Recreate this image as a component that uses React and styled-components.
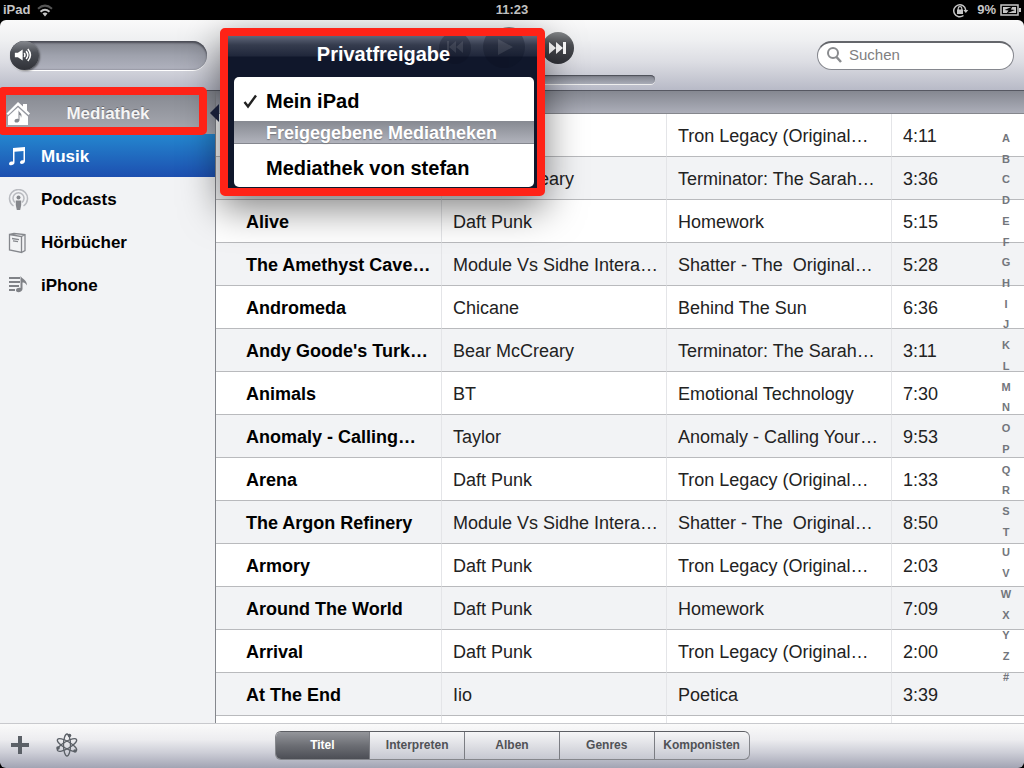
import React from "react";
import styled, { createGlobalStyle, css } from "styled-components";

const GlobalStyle = createGlobalStyle`
  *, *::before, *::after { box-sizing: border-box; }
  body {
    margin: 0;
    background: #000;
    color: #000;
    font-family: "Liberation Sans", Arial, sans-serif;
  }
  button { font: inherit; border: 0; padding: 0; background: none; color: inherit; cursor: pointer; }
`;

const songs = [
  ["", "", "Tron Legacy (Original…", "4:11"],
  ["", "Bear McCreary", "Terminator: The Sarah…", "3:36"],
  ["Alive", "Daft Punk", "Homework", "5:15"],
  ["The Amethyst Cave…", "Module Vs Sidhe Intera…", "Shatter - The  Original…", "5:28"],
  ["Andromeda", "Chicane", "Behind The Sun", "6:36"],
  ["Andy Goode's Turk…", "Bear McCreary", "Terminator: The Sarah…", "3:11"],
  ["Animals", "BT", "Emotional Technology", "7:30"],
  ["Anomaly - Calling…", "Taylor", "Anomaly - Calling Your…", "9:53"],
  ["Arena", "Daft Punk", "Tron Legacy (Original…", "1:33"],
  ["The Argon Refinery", "Module Vs Sidhe Intera…", "Shatter - The  Original…", "8:50"],
  ["Armory", "Daft Punk", "Tron Legacy (Original…", "2:03"],
  ["Around The World", "Daft Punk", "Homework", "7:09"],
  ["Arrival", "Daft Punk", "Tron Legacy (Original…", "2:00"],
  ["At The End", "Iio", "Poetica", "3:39"],
  ["", "", "", ""],
];

const letters = "ABCDEFGHIJKLMNOPQRSTUVWXYZ#".split("");
const tabs = ["Titel", "Interpreten", "Alben", "Genres", "Komponisten"];

const Screen = styled.div`
  position: relative;
  display: flex;
  flex-direction: column;
  height: 100vh;
  overflow: hidden;
`;

const StatusBar = styled.header`
  display: grid;
  grid-template-columns: 1fr auto 1fr;
  align-items: center;
  height: 20px;
  padding: 0 3px;
  color: #c6c6c6;
  font-size: 13px;
  font-weight: bold;
  line-height: 18px;
`;

const StatusGroup = styled.div`
  display: flex;
  align-items: center;
  gap: ${(p) => (p.$end ? "4px" : "6px")};
  justify-content: ${(p) => (p.$end ? "flex-end" : "flex-start")};
`;

const StatusLevel = styled.span`
  padding-left: 4px;
`;

const Toolbar = styled.section`
  display: grid;
  grid-template-columns: 197px 1fr 197px;
  align-items: center;
  flex: none;
  height: 71px;
  padding: 0 10px;
  border-bottom: 1px solid #565862;
  border-radius: 6px 6px 0 0;
  background: linear-gradient(#fafafa 0%, #eeeff1 30%, #dcdde3 60%, #b8bac7 100%);
`;

const Volume = styled.label`
  position: relative;
  display: block;
  height: 29px;

  svg {
    position: absolute;
    left: 4px;
    top: 5px;
    pointer-events: none;
  }
`;

const VolumeRange = styled.input`
  appearance: none;
  display: block;
  width: 100%;
  height: 29px;
  margin: 0;
  border-radius: 15px;
  background: linear-gradient(#83868f, #9fa2ad 50%, #b0b2be);
  box-shadow: inset 0 2px 2px #4c4e57, inset 1px 0 2px #666973, 0 1px 0 #fff;

  &::-webkit-slider-thumb {
    appearance: none;
    width: 29px;
    height: 29px;
    border-radius: 50%;
    background: linear-gradient(#85888e, #4b4e55 40%, #303238);
    box-shadow: 1px 1px 2px rgba(0, 0, 0, 0.5);
  }
`;

const Player = styled.div`
  display: flex;
  flex-direction: column;
  align-items: center;
  gap: 6px;
`;

const Transport = styled.div`
  display: flex;
  align-items: center;
  gap: 12px;
  height: 42px;
  padding-right: 6px;
`;

const RoundButton = styled.button`
  display: grid;
  place-items: center;
  width: ${(p) => (p.$large ? 42 : 32)}px;
  height: ${(p) => (p.$large ? 42 : 32)}px;
  border-radius: 50%;
  background: linear-gradient(#85888a, #4b4d52 40%, #303238);
  color: #fff;
`;

const Progress = styled.input`
  appearance: none;
  width: 286px;
  height: 9px;
  margin: 0;
  border-radius: 5px;
  background: linear-gradient(#7c7f89, #a9acb7);
  box-shadow: inset 0 1px 1px #4c4e57, 0 1px 0 #eee;

  &::-webkit-slider-thumb {
    appearance: none;
    width: 8px;
    height: 8px;
  }
`;

const Search = styled.label`
  display: flex;
  align-items: center;
  gap: 7px;
  height: 29px;
  padding: 0 9px 2px;
  border: 1px solid #85878e;
  border-top: 2px solid #64666b;
  border-radius: 15px;
  background: #fff;

  input {
    min-width: 0;
    flex: 1;
    padding: 0;
    border: 0;
    outline: 0;
    background: none;
    font: 15px "Liberation Sans", Arial, sans-serif;
  }
  input::placeholder { color: #808080; }
`;

const Main = styled.main`
  display: flex;
  flex: 1;
  min-height: 0;
`;

const Sidebar = styled.nav`
  flex: none;
  width: 216px;
  border-right: 1px solid #85878d;
  background: #f2f3f5;
`;

const rowText = css`
  display: flex;
  align-items: center;
  width: 100%;
  height: 43px;
  font-size: 17px;
  font-weight: bold;
`;

const LibraryButton = styled.button`
  ${rowText}
  padding: 2px 6px 0;
  background: linear-gradient(#858890, #a9abb3);
  color: #f5f5f5;
  text-shadow: 0 -1px 0 #6b6d74;

  span { flex: 1; padding-right: 24px; text-align: center; }
`;

const SourceButton = styled.button`
  ${rowText}
  gap: 12px;
  padding: 2px 7px 0;
  text-align: left;
  color: ${(p) => (p.$active ? "#fff" : "#000")};
  background: ${(p) => (p.$active ? "linear-gradient(#2487cf, #1d4fb0)" : "none")};
`;

const Content = styled.section`
  position: relative;
  flex: 1;
  min-width: 0;
  overflow: hidden;
  background: #fff;
`;

const Strip = styled.div`
  height: 23px;
  border-bottom: 1px solid #85878d;
  background: linear-gradient(#858891, #acaeb9);
`;

const SongTable = styled.table`
  width: 100%;
  table-layout: fixed;
  border-collapse: separate;
  border-spacing: 0;
  font-size: 18px;
`;

const Duration = styled.col`
  width: 133px;
`;

const Song = styled.tr`
  background: ${(p) => (p.$shaded ? "#f2f3f5" : "#fff")};
`;

const Cell = styled.td`
  height: 43px;
  padding: 2px 0 0 ${(p) => (p.$title ? 30 : 11)}px;
  border-bottom: 1px solid #b9babd;
  border-left: ${(p) => (p.$title ? "0" : "1px solid #e4e5e8")};
  color: ${(p) => (p.$title ? "#000" : "#222")};
  font-weight: ${(p) => (p.$title ? "bold" : "normal")};
  white-space: pre;
`;

const AlphabetIndex = styled.ol`
  position: absolute;
  top: 37px;
  right: 8px;
  bottom: 36px;
  display: flex;
  flex-direction: column;
  justify-content: space-between;
  width: 20px;
  margin: 0;
  padding: 0;
  list-style: none;
  color: #73767c;
  font-size: 11px;
  font-weight: bold;
  line-height: 20px;
  text-align: center;
`;

const Footer = styled.footer`
  display: grid;
  grid-template-columns: 1fr auto 1fr;
  align-items: center;
  flex: none;
  height: 45px;
  padding: 0 10px 2px;
  border-top: 1px solid #c8c9cd;
  border-radius: 0 0 6px 6px;
  background: linear-gradient(#fafafa, #ededf0 35%, #cdced7 65%, #a2a4b3);
`;

const Tools = styled.div`
  display: flex;
  align-items: center;
  gap: 25px;

  button, svg { display: block; }
`;

const Segments = styled.div`
  display: flex;
  width: 475px;
  height: 29px;
  overflow: hidden;
  border: 1px solid #85878c;
  border-top-color: #5d5f64;
  border-radius: 6px;
  background: linear-gradient(#f6f6f7, #c6c8d1);
`;

const Segment = styled.button`
  flex: 1;
  color: ${(p) => (p.$active ? "#fff" : "#505256")};
  background: ${(p) => (p.$active ? "linear-gradient(#94969b, #6c6e74 50%, #4c4e55)" : "none")};
  font-size: 12px;
  font-weight: bold;

  & + & { border-left: 1px solid #7b7d83; }
`;

const highlight = css`
  position: absolute;
  border: 8px solid #ff2317;
  border-radius: 5px;
`;

const LibraryHighlight = styled.div`
  ${highlight}
  top: 87px;
  left: -2px;
  width: 209px;
  height: 48px;
  pointer-events: none;
`;

const Popover = styled.div`
  ${highlight}
  top: 28px;
  left: 220px;
  width: 325px;
  padding: 0 3px 1px 6px;
  background: #10172b;
  box-shadow: 0 12px 38px rgba(0, 0, 0, 0.5);
`;

const PopoverTitle = styled.h2`
  height: 41px;
  margin: 0 -3px 0 -6px;
  padding: 0 0 4px 2px;
  background: linear-gradient(#60677a 0, #353c4e 9px, #20273b 20px, #10172b 21px);
  color: #fff;
  font-size: 20px;
  line-height: 37px;
  text-align: center;

  span { position: relative; }
`;

const GhostControls = styled.svg`
  position: absolute;
  top: 0;
  right: 3px;
`;

const PopoverArrow = styled.div`
  position: absolute;
  top: 68px;
  left: -18px;
  border: 9px solid transparent;
  border-right-color: #171d35;
  border-left-width: 0;
`;

const Choices = styled.div`
  overflow: hidden;
  border-radius: 5px;
  background: #fff;
`;

const Choice = styled.button`
  display: flex;
  align-items: center;
  width: 100%;
  height: ${(p) => (p.$checked ? 44 : 43)}px;
  padding-left: ${(p) => (p.$checked ? 9 : 32)}px;
  gap: 8px;
  padding-top: 5px;
  color: #000;
  font-size: 20px;
  font-weight: bold;
`;

const ChoiceHeading = styled.h3`
  height: 23px;
  margin: 0;
  padding-left: 32px;
  border-bottom: 1px solid #85878f;
  background: linear-gradient(#868991, #b1b3bc);
  color: #fff;
  text-shadow: 0 1px 1px #777981;
  font-size: 18px;
  line-height: 24px;
`;

const WifiIcon = () => (
  <svg width="18" height="13" viewBox="0 0 18 13" fill="none" strokeWidth="2">
    <path d="M2 4.8 Q9 -1.5 16 4.8" stroke="#555" />
    <path d="M4.5 7.8 Q9 3.8 13.500 7.800" stroke="#c6c6c6" />
    <path d="M6.500 9.500 Q9 7.500 11.500 9.500 L9 12.500Z" fill="#c6c6c6" />
  </svg>
);

const LockIcon = () => (
  <svg width="17" height="15" viewBox="0 0 17 15" fill="none" stroke="#c6c6c6" strokeWidth="1.500">
    <path d="M11.500 12.500 A6 6 0 1 1 13.700 7" />
    <path d="M11.300 7 H16.300 L13.800 10Z" fill="#c6c6c6" stroke="none" />
    <rect x="5" y="6.500" width="6" height="4.500" fill="#c6c6c6" stroke="none" />
    <path d="M6.200 7 V5.500 a1.800 1.800 0 0 1 3.600 0 V7" strokeWidth="1.200" />
  </svg>
);

const BatteryIcon = () => (
  <svg width="21" height="12" viewBox="0 0 21 12">
    <rect x="1" y="1" width="17" height="10" fill="none" stroke="#c6c6c6" strokeWidth="1.500" />
    <path d="M19 4 H21 V8 H19Z" fill="#c6c6c6" />
    <rect x="3" y="3" width="13" height="6" fill="#c6c6c6" />
    <path d="M12.500 2.500 L4.500 6 L8.500 6.500 L6.500 9.500 L15 6 L10.800 5.500Z" fill="#000" />
  </svg>
);

const SpeakerIcon = () => (
  <svg width="19" height="18" viewBox="0 0 22 20" fill="none" stroke="#fff" strokeWidth="1.800">
    <path d="M1 7.500 H4.500 L10 3.500 V16.500 L4.500 12.500 H1Z" fill="#fff" stroke="none" />
    <path d="M11.800 7.800 Q13.500 10 11.800 12.200 M14 5.500 Q18 10 14 14.500 M16 3 Q22 10 16 17" />
  </svg>
);

const SkipIcon = ({ back }) => (
  <svg width="18" height="12" viewBox="0 0 18 12" fill="currentColor">
    <path d={back ? "M18 0 V12 L11 6Z M11 0 V12 L4 6Z M1 0 H4 V12 H1Z" : "M0 0 V12 L7 6Z M7 0 V12 L14 6Z M14 0 H17 V12 H14Z"} />
  </svg>
);

const PlayIcon = () => (
  <svg width="17" height="17" viewBox="0 0 17 17" fill="currentColor"><path d="M2 0 L17 8.500 L2 17Z" /></svg>
);

const SearchIcon = () => (
  <svg width="15" height="16" viewBox="0 0 15 16" fill="none" stroke="#898b8e" strokeWidth="2">
    <circle cx="6" cy="6" r="5" /><path d="M9.500 10 L14 15" strokeWidth="2.500" />
  </svg>
);

const HouseIcon = () => (
  <svg width="25" height="25" viewBox="0 0 25 25">
    <path d="M0.500 12.500 L12 1 L17 5.500 V3 H21 V9.500 L24 12.500 L22.500 14 L12 4.500 L2 14Z" fill="#fff" />
    <path d="M2 15.500 L12 6.200 L22 15.500 V24 H2Z" fill="#fff" />
    <path d="M12.500 9 C13 12 17 12 15 17 C15 14.500 14 14 13.500 14 V19 C13.500 22 8.500 22.500 8.500 20 C8.500 18 11 17.200 12.500 18Z" fill="#85888f" />
  </svg>
);

const sourceIcons = {
  music: (
    <svg width="22" height="22" viewBox="0 0 22 22" fill="#fff">
      <path d="M6 2 L18 1 V15 C18 18 13 19 13 16.500 C13 14.500 15 14 16.500 14.200 V5 L7.500 5.700 V16.500 C7.500 19.500 2 20.200 2 17.700 C2 15.700 4.500 15.200 6 15.500Z" />
    </svg>
  ),
  podcasts: (
    <svg width="22" height="22" viewBox="0 0 22 22" fill="none" stroke="#b9bbc0" strokeWidth="1.500">
      <path d="M6.500 17 A9 9 0 1 1 16.500 17 M8 13.500 A5.500 5.500 0 1 1 15 13.500" />
      <circle cx="11.500" cy="8.500" r="2" fill="#85878c" stroke="none" />
      <path d="M8.800 11.500 H14.200 V16 L13.200 21 H9.800 L8.800 16Z" fill="#85878c" stroke="none" />
    </svg>
  ),
  books: (
    <svg width="22" height="22" viewBox="0 0 22 22" fill="none" stroke="#85878c" strokeWidth="1.300">
      <path d="M2.500 2.500 L14.500 4.500 V20.500 L2.500 18Z M2.500 2.500 L7 1.500 L18 2.700 V18.500 L14.500 20.500 M14.500 4.500 L18 2.700" />
      <path d="M5 6.500 L12 7.600 M6 8.800 L11 9.600" />
    </svg>
  ),
  playlist: (
    <svg width="22" height="22" viewBox="0 0 22 22" fill="#808287">
      <path d="M2 2 H13 V4 H2Z M2 6 H13 V8 H2Z M2 10 H12 V12 H2Z M2 14 H8 V16 H2Z" />
      <path d="M13.500 1 C15 4 20 4.500 20 10.500 C18.500 8 17 7.500 15.500 7.500 V14 C15.500 17.500 9 18.300 9 15.300 C9 13 12 12.500 13.500 13Z" />
    </svg>
  ),
};

const sources = [
  ["Musik", "music"],
  ["Podcasts", "podcasts"],
  ["Hörbücher", "books"],
  ["iPhone", "playlist"],
];

const PlusIcon = () => (
  <svg width="20" height="20" viewBox="0 0 20 20"><path d="M1 10 H19 M10 1 V19" stroke="#5b6067" strokeWidth="4" /></svg>
);

const GeniusIcon = () => (
  <svg width="24" height="24" viewBox="0 0 24 24" fill="none" stroke="#5b6067" strokeWidth="1.300">
    {[0, 60, 120].map((a) => (
      <ellipse key={a} cx="12" cy="12" rx="3.500" ry="11" transform={`rotate(${a} 12 12)`} />
    ))}
    <g fill="#5b6067" stroke="none">
      <circle cx="14.500" cy="2.500" r="1.800" /><circle cx="3" cy="15" r="1.800" /><circle cx="20" cy="18" r="1.800" />
    </g>
  </svg>
);

const CheckIcon = () => (
  <svg width="15" height="15" viewBox="0 0 15 15" fill="none" stroke="#222" strokeWidth="2.400">
    <path d="M1.500 8 L5 12.500 L13 1.500" />
  </svg>
);

export default function App() {
  return (
    <>
      <GlobalStyle />
      <Screen>
        <StatusBar>
          <StatusGroup>iPad<WifiIcon /></StatusGroup>
          <time>11:23</time>
          <StatusGroup $end><LockIcon /><StatusLevel>9%</StatusLevel><BatteryIcon /></StatusGroup>
        </StatusBar>
        <Toolbar>
          <Volume>
            <VolumeRange type="range" defaultValue="0" aria-label="Lautstärke" />
            <SpeakerIcon />
          </Volume>
          <Player>
            <Transport>
              <RoundButton aria-label="Zurück"><SkipIcon back /></RoundButton>
              <RoundButton $large aria-label="Wiedergabe"><PlayIcon /></RoundButton>
              <RoundButton aria-label="Weiter"><SkipIcon /></RoundButton>
            </Transport>
            <Progress type="range" defaultValue="0" aria-label="Position" />
          </Player>
          <Search>
            <SearchIcon />
            <input type="search" placeholder="Suchen" aria-label="Suchen" />
          </Search>
        </Toolbar>
        <Main>
          <Sidebar>
            <LibraryButton><HouseIcon /><span>Mediathek</span></LibraryButton>
            {sources.map(([name, icon], i) => (
              <SourceButton key={name} $active={i === 0}>{sourceIcons[icon]}{name}</SourceButton>
            ))}
          </Sidebar>
          <Content>
            <Strip />
            <SongTable>
              <colgroup><col /><col /><col /><Duration /></colgroup>
              <tbody>
                {songs.map(([title, artist, album, time], i) => (
                  <Song key={i} $shaded={i % 2 === 1}>
                    <Cell $title>{title}</Cell>
                    <Cell>{artist}</Cell>
                    <Cell>{album}</Cell>
                    <Cell>{time}</Cell>
                  </Song>
                ))}
              </tbody>
            </SongTable>
            <AlphabetIndex>
              {letters.map((l) => <li key={l}>{l}</li>)}
            </AlphabetIndex>
          </Content>
        </Main>
        <Footer>
          <Tools>
            <button aria-label="Neue Wiedergabeliste"><PlusIcon /></button>
            <button aria-label="Genius"><GeniusIcon /></button>
          </Tools>
          <Segments>
            {tabs.map((t, i) => (
              <Segment key={t} $active={i === 0} aria-pressed={i === 0}>{t}</Segment>
            ))}
          </Segments>
        </Footer>
        <Popover role="dialog" aria-label="Privatfreigabe">
          <PopoverArrow />
          <GhostControls width="102" height="34" viewBox="0 0 102 34" aria-hidden="true">
            <g fill="#0b1020" opacity="0.3">
              <circle cx="23" cy="12" r="16" /><circle cx="72" cy="11" r="21" />
            </g>
            <path d="M31 5 V17 L24 11Z M24 5 V17 L17 11Z M15 5 H17 V17 H15Z M66 3 L81 11 L66 19Z" fill="#fff" opacity="0.1" />
          </GhostControls>
          <PopoverTitle><span>Privatfreigabe</span></PopoverTitle>
          <Choices>
            <Choice $checked><CheckIcon />Mein iPad</Choice>
            <ChoiceHeading>Freigegebene Mediatheken</ChoiceHeading>
            <Choice>Mediathek von stefan</Choice>
          </Choices>
        </Popover>
        <LibraryHighlight />
      </Screen>
    </>
  );
}
